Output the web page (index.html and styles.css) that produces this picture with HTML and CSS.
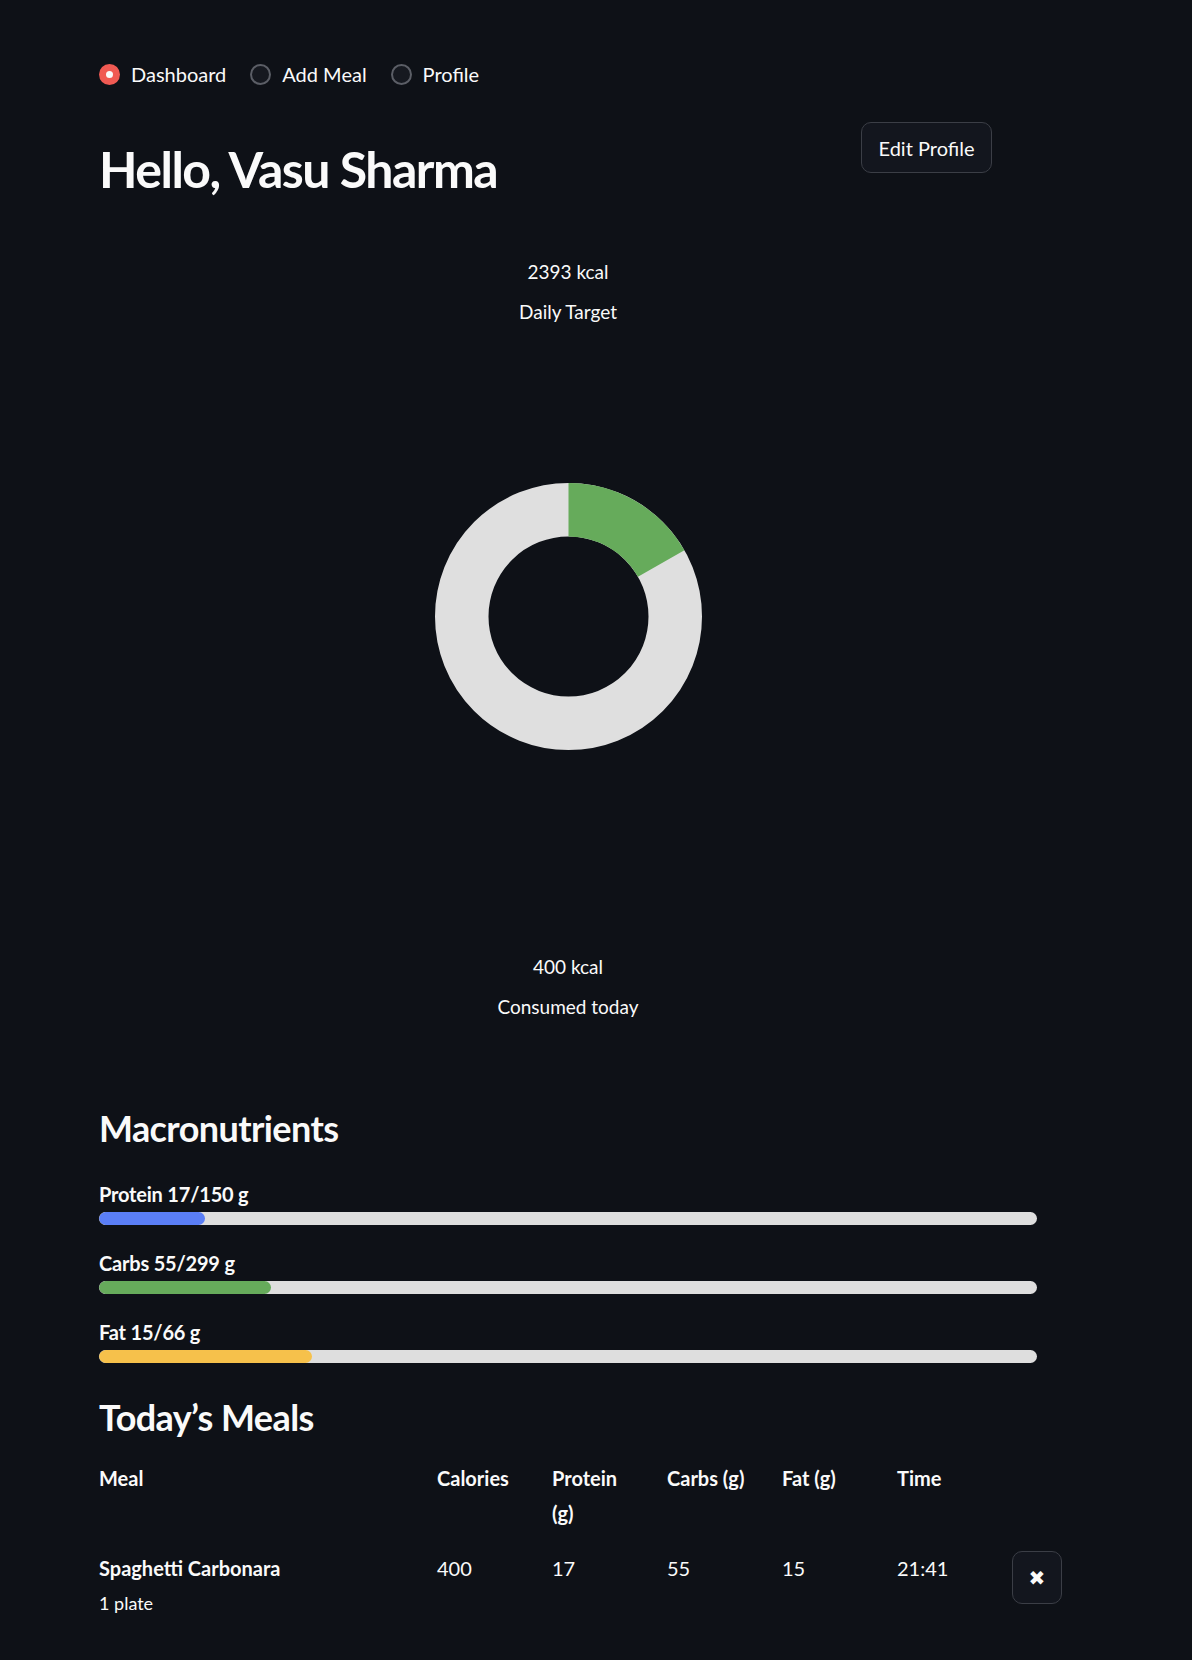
FILE: index.html
```html
<!DOCTYPE html>
<html lang="en">
<head>
<meta charset="utf-8">
<title>Dashboard</title>
<link rel="stylesheet" href="styles.css">
</head>
<body>
<div class="app">
  <nav class="nav">
    <label class="radio"><span class="dot dot-on"></span><span>Dashboard</span></label>
    <label class="radio"><span class="dot"></span><span>Add Meal</span></label>
    <label class="radio"><span class="dot"></span><span>Profile</span></label>
  </nav>

  <header class="head">
    <h1 class="title">Hello, Vasu Sharma</h1>
    <div class="head-side"><button class="btn">Edit Profile</button></div>
  </header>

  <section class="chart">
    <div class="ch-line">2393 kcal</div>
    <div class="ch-line">Daily Target</div>
    <svg class="donut" width="267" height="267" viewBox="0 0 267 267">
      <circle cx="133.5" cy="133.5" r="106.75" fill="none" stroke="#dfdfdf" stroke-width="53.5"/>
      <circle cx="133.5" cy="133.5" r="106.75" fill="none" stroke="#66ab5b" stroke-width="53.5"
              stroke-dasharray="112.1 700" transform="rotate(-90 133.5 133.5)"/>
    </svg>
    <div class="ch-line ch-bottom">400 kcal</div>
    <div class="ch-line">Consumed today</div>
  </section>

  <h2 class="h2 h2-macro">Macronutrients</h2>
  <div class="macros">
    <div class="macro">
      <div class="macro-label">Protein 17/150 g</div>
      <div class="track"><div class="fill fill-blue" style="width:11.33%"></div></div>
    </div>
    <div class="macro">
      <div class="macro-label">Carbs 55/299 g</div>
      <div class="track"><div class="fill fill-green" style="width:18.39%"></div></div>
    </div>
    <div class="macro">
      <div class="macro-label">Fat 15/66 g</div>
      <div class="track"><div class="fill fill-yellow" style="width:22.73%"></div></div>
    </div>
  </div>

  <h2 class="h2 h2-meals">Today’s Meals</h2>
  <div class="meals">
    <div class="row row-head">
      <div>Meal</div>
      <div>Calories</div>
      <div>Protein (g)</div>
      <div>Carbs (g)</div>
      <div>Fat (g)</div>
      <div>Time</div>
      <div></div>
    </div>
    <div class="row row-data">
      <div><div class="meal-name">Spaghetti Carbonara</div><div class="meal-qty">1 plate</div></div>
      <div>400</div>
      <div>17</div>
      <div>55</div>
      <div>15</div>
      <div>21:41</div>
      <div><button class="del">✖</button></div>
    </div>
  </div>
</div>
</body>
</html>
```

FILE: styles.css
```css
* { box-sizing: border-box; }
html, body { margin: 0; padding: 0; }
body {
  background: #0e1117;
  color: #fafafa;
  font-family: "Source Sans Pro", Lato, "Noto Sans", sans-serif;
  width: 1192px;
  min-height: 1660px;
}
.app {
  padding: 59px 0 40px 99px;
  width: 1192px;
}
.nav {
  display: flex;
  align-items: center;
  gap: 24px;
  height: 30px;
  font-size: 20px;
  line-height: 30px;
}
.radio { display: flex; align-items: center; gap: 11px; }
.dot {
  width: 21px; height: 21px;
  border-radius: 50%;
  border: 2px solid #5b5e66;
  background: #161920;
  display: inline-block;
}
.dot-on {
  border: none;
  background: #f05a53;
  position: relative;
}
.dot-on::after {
  content: "";
  position: absolute;
  left: 7px; top: 7px;
  width: 7px; height: 7px;
  border-radius: 50%;
  background: #fafafa;
}

.head {
  margin-top: 33px;
  display: grid;
  grid-template-columns: 742px auto;
  column-gap: 20px;
  align-items: start;
}
.title {
  margin: 0;
  padding-top: 14px;
  font-size: 50px;
  line-height: 66px;
  font-weight: 700;
  letter-spacing: -1.5px;
}
.btn {
  width: 131px;
  height: 51px;
  border-radius: 10px;
  border: 1px solid #3b3e46;
  background: #13161e;
  color: #fafafa;
  font-family: inherit;
  font-size: 20px;
  padding: 0;
}

.chart {
  margin-top: 50px;
  width: 938px;
  display: flex;
  flex-direction: column;
  align-items: center;
}
.ch-line {
  font-size: 19px;
  line-height: 40px;
  height: 40px;
}
.donut { display: block; margin-top: 151px; }
.ch-bottom { margin-top: 197px; }

.h2 {
  margin: 0;
  font-size: 36px;
  line-height: 46px;
  font-weight: 700;
  letter-spacing: -0.6px;
}
.h2-macro { margin-top: 78px; }
.macros {
  margin-top: 31px;
  width: 938px;
  display: flex;
  flex-direction: column;
  gap: 26px;
}
.macro-label {
  font-size: 20px;
  line-height: 24px;
  font-weight: 700;
  letter-spacing: -0.2px;
}
.track {
  margin-top: 6px;
  height: 13px;
  border-radius: 7px;
  background: #dedede;
  overflow: hidden;
}
.fill { height: 100%; border-radius: 7px; }
.fill-blue { background: #5a7ef6; }
.fill-green { background: #66ab5b; }
.fill-yellow { background: #f6c14b; }

.h2-meals { margin-top: 31px; }
.meals { margin-top: 21px; }
.row {
  display: grid;
  grid-template-columns: 313px 90px 90px 90px 90px 90px 50px;
  column-gap: 25px;
  font-size: 20px;
  line-height: 35px;
}
.row-head { font-weight: 700; }
.row-data { margin-top: 20px; }
.meal-name { font-weight: 700; }
.meal-qty { font-size: 18px; }
.del {
  width: 50px;
  height: 53px;
  border-radius: 10px;
  border: 1px solid #3b3e46;
  background: #13161e;
  color: #fafafa;
  font-family: "DejaVu Sans", sans-serif;
  font-size: 20px;
  padding: 0;
}
```
